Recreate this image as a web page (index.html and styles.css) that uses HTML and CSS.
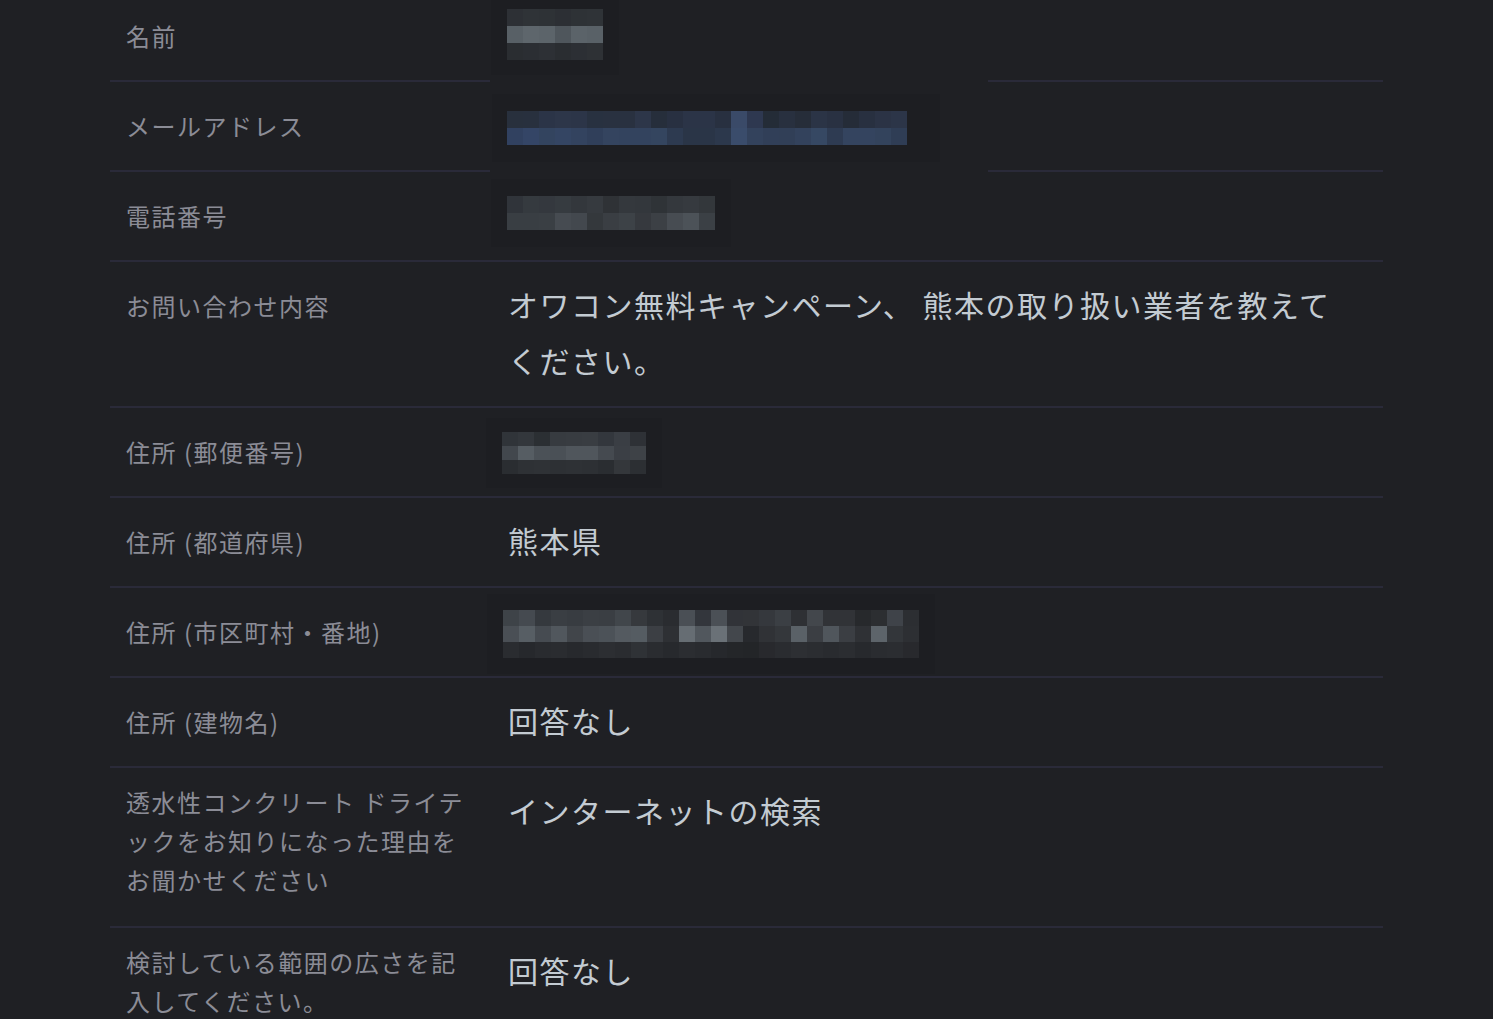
FILE: index.html
```html
<!DOCTYPE html>
<html lang="ja">
<head>
<meta charset="utf-8">
<title>お問い合わせ内容</title>
<link rel="stylesheet" href="styles.css">
</head>
<body>
<div class="sheet">
  <div class="row">
    <div class="label">名前</div>
    <div class="value">
      <svg class="mosaic m-name" width="128" height="85" viewBox="0 0 128 85" shape-rendering="crispEdges">
        <rect x="0" y="0" width="128" height="85" fill="#1d1e22"/>
        <g transform="translate(16,17)">
          <rect x="0" y="0" width="16" height="17" fill="#2d3035"/><rect x="16" y="0" width="16" height="17" fill="#2f3337"/><rect x="32" y="0" width="16" height="17" fill="#2e3236"/><rect x="48" y="0" width="16" height="17" fill="#2c2f34"/><rect x="64" y="0" width="16" height="17" fill="#2e3236"/><rect x="80" y="0" width="16" height="17" fill="#2f3337"/>
          <rect x="0" y="17" width="16" height="17" fill="#586066"/><rect x="16" y="17" width="16" height="17" fill="#5e666c"/><rect x="32" y="17" width="16" height="17" fill="#5c646a"/><rect x="48" y="17" width="16" height="17" fill="#4f565c"/><rect x="64" y="17" width="16" height="17" fill="#5b6369"/><rect x="80" y="17" width="16" height="17" fill="#596167"/>
          <rect x="0" y="34" width="16" height="17" fill="#2a2d31"/><rect x="16" y="34" width="16" height="17" fill="#2b2e33"/><rect x="32" y="34" width="16" height="17" fill="#2d3035"/><rect x="48" y="34" width="16" height="17" fill="#2a2d31"/><rect x="64" y="34" width="16" height="17" fill="#2c2f34"/><rect x="80" y="34" width="16" height="17" fill="#2e3135"/>
        </g>
      </svg>
    </div>
  </div>

  <div class="row">
    <div class="label">メールアドレス</div>
    <div class="value value--covered">
      <svg class="cover" width="498" height="102" viewBox="0 0 498 102" shape-rendering="crispEdges">
        <rect x="0" y="0" width="498" height="102" fill="#1f2024"/>
        <rect x="2" y="19" width="448" height="68" fill="#1d1e22"/>
        <g transform="translate(17,36)">
          <rect x="0" y="0" width="16" height="17" fill="#28303d"/><rect x="16" y="0" width="16" height="17" fill="#28303e"/><rect x="32" y="0" width="16" height="17" fill="#2b3447"/><rect x="48" y="0" width="16" height="17" fill="#2d3649"/><rect x="64" y="0" width="16" height="17" fill="#2c3548"/><rect x="80" y="0" width="16" height="17" fill="#283140"/><rect x="96" y="0" width="16" height="17" fill="#293140"/><rect x="112" y="0" width="16" height="17" fill="#293140"/><rect x="128" y="0" width="16" height="17" fill="#2d3649"/><rect x="144" y="0" width="16" height="17" fill="#262e3b"/><rect x="160" y="0" width="16" height="17" fill="#283041"/><rect x="176" y="0" width="16" height="17" fill="#2b3447"/><rect x="192" y="0" width="16" height="17" fill="#2b3447"/><rect x="208" y="0" width="16" height="17" fill="#283040"/><rect x="224" y="0" width="16" height="17" fill="#3a4a68"/><rect x="240" y="0" width="16" height="17" fill="#2e3850"/><rect x="256" y="0" width="16" height="17" fill="#242c37"/><rect x="272" y="0" width="16" height="17" fill="#28303f"/><rect x="288" y="0" width="16" height="17" fill="#262d39"/><rect x="304" y="0" width="16" height="17" fill="#2b3446"/><rect x="320" y="0" width="16" height="17" fill="#293142"/><rect x="336" y="0" width="16" height="17" fill="#252c38"/><rect x="352" y="0" width="16" height="17" fill="#283040"/><rect x="368" y="0" width="16" height="17" fill="#2b3345"/><rect x="384" y="0" width="16" height="17" fill="#2c3548"/>
          <rect x="0" y="17" width="16" height="17" fill="#314160"/><rect x="16" y="17" width="16" height="17" fill="#344566"/><rect x="32" y="17" width="16" height="17" fill="#33445f"/><rect x="48" y="17" width="16" height="17" fill="#344563"/><rect x="64" y="17" width="16" height="17" fill="#33435f"/><rect x="80" y="17" width="16" height="17" fill="#303f5a"/><rect x="96" y="17" width="16" height="17" fill="#34445f"/><rect x="112" y="17" width="16" height="17" fill="#33435e"/><rect x="128" y="17" width="16" height="17" fill="#33435e"/><rect x="144" y="17" width="16" height="17" fill="#34455f"/><rect x="160" y="17" width="16" height="17" fill="#2d3a50"/><rect x="176" y="17" width="16" height="17" fill="#2a3547"/><rect x="192" y="17" width="16" height="17" fill="#2a3547"/><rect x="208" y="17" width="16" height="17" fill="#2c384c"/><rect x="224" y="17" width="16" height="17" fill="#3a4c6b"/><rect x="240" y="17" width="16" height="17" fill="#33425c"/><rect x="256" y="17" width="16" height="17" fill="#313f58"/><rect x="272" y="17" width="16" height="17" fill="#313f57"/><rect x="288" y="17" width="16" height="17" fill="#33425c"/><rect x="304" y="17" width="16" height="17" fill="#364863"/><rect x="320" y="17" width="16" height="17" fill="#2e3b52"/><rect x="336" y="17" width="16" height="17" fill="#34445f"/><rect x="352" y="17" width="16" height="17" fill="#34445f"/><rect x="368" y="17" width="16" height="17" fill="#33435c"/><rect x="384" y="17" width="16" height="17" fill="#2f3d55"/>
        </g>
      </svg>
    </div>
  </div>

  <div class="row">
    <div class="label">電話番号</div>
    <div class="value">
      <svg class="mosaic m-phone" width="240" height="68" viewBox="0 0 240 68" shape-rendering="crispEdges">
        <rect x="0" y="0" width="240" height="68" fill="#1d1e22"/>
        <g transform="translate(16,17)">
          <rect x="0" y="0" width="16" height="17" fill="#30343a"/><rect x="16" y="0" width="16" height="17" fill="#353a3f"/><rect x="32" y="0" width="16" height="17" fill="#34383e"/><rect x="48" y="0" width="16" height="17" fill="#363b40"/><rect x="64" y="0" width="16" height="17" fill="#33373c"/><rect x="80" y="0" width="16" height="17" fill="#363a3f"/><rect x="96" y="0" width="16" height="17" fill="#2f3236"/><rect x="112" y="0" width="16" height="17" fill="#34383d"/><rect x="128" y="0" width="16" height="17" fill="#33373c"/><rect x="144" y="0" width="16" height="17" fill="#2f3337"/><rect x="160" y="0" width="16" height="17" fill="#34383d"/><rect x="176" y="0" width="16" height="17" fill="#363a3f"/><rect x="192" y="0" width="16" height="17" fill="#33373b"/>
          <rect x="0" y="17" width="16" height="17" fill="#393e43"/><rect x="16" y="17" width="16" height="17" fill="#393e43"/><rect x="32" y="17" width="16" height="17" fill="#3a3f44"/><rect x="48" y="17" width="16" height="17" fill="#464b51"/><rect x="64" y="17" width="16" height="17" fill="#43484e"/><rect x="80" y="17" width="16" height="17" fill="#34383c"/><rect x="96" y="17" width="16" height="17" fill="#3a3e43"/><rect x="112" y="17" width="16" height="17" fill="#3d4247"/><rect x="128" y="17" width="16" height="17" fill="#36393e"/><rect x="144" y="17" width="16" height="17" fill="#3c4045"/><rect x="160" y="17" width="16" height="17" fill="#474c52"/><rect x="176" y="17" width="16" height="17" fill="#4c5258"/><rect x="192" y="17" width="16" height="17" fill="#3b4045"/>
        </g>
      </svg>
    </div>
  </div>

  <div class="row">
    <div class="label">お問い合わせ内容</div>
    <div class="value">オワコン無料キャンペーン、 熊本の取り扱い業者を教えてください。</div>
  </div>

  <div class="row">
    <div class="label">住所 (郵便番号)</div>
    <div class="value">
      <svg class="mosaic m-zip" width="176" height="70" viewBox="0 0 176 70" shape-rendering="crispEdges">
        <rect x="0" y="0" width="176" height="70" fill="#1d1e22"/>
        <g transform="translate(16,14)">
          <rect x="0" y="0" width="16" height="14" fill="#303439"/><rect x="16" y="0" width="16" height="14" fill="#33373c"/><rect x="32" y="0" width="16" height="14" fill="#2b2f33"/><rect x="48" y="0" width="16" height="14" fill="#373b40"/><rect x="64" y="0" width="16" height="14" fill="#383c41"/><rect x="80" y="0" width="16" height="14" fill="#393d42"/><rect x="96" y="0" width="16" height="14" fill="#33373d"/><rect x="112" y="0" width="16" height="14" fill="#3a3e44"/><rect x="128" y="0" width="16" height="14" fill="#2e3136"/>
          <rect x="0" y="14" width="16" height="14" fill="#42474d"/><rect x="16" y="14" width="16" height="14" fill="#565d63"/><rect x="32" y="14" width="16" height="14" fill="#4b5157"/><rect x="48" y="14" width="16" height="14" fill="#4a5056"/><rect x="64" y="14" width="16" height="14" fill="#50565c"/><rect x="80" y="14" width="16" height="14" fill="#50565c"/><rect x="96" y="14" width="16" height="14" fill="#454a50"/><rect x="112" y="14" width="16" height="14" fill="#3b3f45"/><rect x="128" y="14" width="16" height="14" fill="#3e4247"/>
          <rect x="0" y="28" width="16" height="14" fill="#2a2d31"/><rect x="16" y="28" width="16" height="14" fill="#2e3135"/><rect x="32" y="28" width="16" height="14" fill="#2f3236"/><rect x="48" y="28" width="16" height="14" fill="#2d3034"/><rect x="64" y="28" width="16" height="14" fill="#2e3135"/><rect x="80" y="28" width="16" height="14" fill="#2d3034"/><rect x="96" y="28" width="16" height="14" fill="#2a2d31"/><rect x="112" y="28" width="16" height="14" fill="#34373b"/><rect x="128" y="28" width="16" height="14" fill="#2c2f33"/>
        </g>
      </svg>
    </div>
  </div>

  <div class="row">
    <div class="label">住所 (都道府県)</div>
    <div class="value">熊本県</div>
  </div>

  <div class="row">
    <div class="label">住所 (市区町村・番地)</div>
    <div class="value">
      <svg class="mosaic m-addr" width="448" height="80" viewBox="0 0 448 80" shape-rendering="crispEdges">
        <rect x="0" y="0" width="448" height="80" fill="#1d1e22"/>
        <g transform="translate(16,16)">
          <rect x="0" y="0" width="16" height="16" fill="#3e4348"/><rect x="16" y="0" width="16" height="16" fill="#454a50"/><rect x="32" y="0" width="16" height="16" fill="#35393e"/><rect x="48" y="0" width="16" height="16" fill="#3a3e43"/><rect x="64" y="0" width="16" height="16" fill="#383c41"/><rect x="80" y="0" width="16" height="16" fill="#3b3f44"/><rect x="96" y="0" width="16" height="16" fill="#3a3e43"/><rect x="112" y="0" width="16" height="16" fill="#41464b"/><rect x="128" y="0" width="16" height="16" fill="#36393d"/><rect x="144" y="0" width="16" height="16" fill="#2e3135"/><rect x="160" y="0" width="16" height="16" fill="#2a2c30"/><rect x="176" y="0" width="16" height="16" fill="#4a4f55"/><rect x="192" y="0" width="16" height="16" fill="#33363c"/><rect x="208" y="0" width="16" height="16" fill="#4b5056"/><rect x="224" y="0" width="16" height="16" fill="#313338"/><rect x="240" y="0" width="16" height="16" fill="#323438"/><rect x="256" y="0" width="16" height="16" fill="#35383d"/><rect x="272" y="0" width="16" height="16" fill="#3b3f44"/><rect x="288" y="0" width="16" height="16" fill="#2e3034"/><rect x="304" y="0" width="16" height="16" fill="#43474c"/><rect x="320" y="0" width="16" height="16" fill="#313337"/><rect x="336" y="0" width="16" height="16" fill="#313337"/><rect x="352" y="0" width="16" height="16" fill="#27292c"/><rect x="368" y="0" width="16" height="16" fill="#2c2e31"/><rect x="384" y="0" width="16" height="16" fill="#3f4349"/><rect x="400" y="0" width="16" height="16" fill="#2c2e32"/>
          <rect x="0" y="16" width="16" height="16" fill="#4a4f55"/><rect x="16" y="16" width="16" height="16" fill="#575e64"/><rect x="32" y="16" width="16" height="16" fill="#464b51"/><rect x="48" y="16" width="16" height="16" fill="#51575d"/><rect x="64" y="16" width="16" height="16" fill="#41454a"/><rect x="80" y="16" width="16" height="16" fill="#4a4f55"/><rect x="96" y="16" width="16" height="16" fill="#4c5258"/><rect x="112" y="16" width="16" height="16" fill="#545a60"/><rect x="128" y="16" width="16" height="16" fill="#555c62"/><rect x="144" y="16" width="16" height="16" fill="#3c3f44"/><rect x="160" y="16" width="16" height="16" fill="#2e3034"/><rect x="176" y="16" width="16" height="16" fill="#666d73"/><rect x="192" y="16" width="16" height="16" fill="#51575d"/><rect x="208" y="16" width="16" height="16" fill="#6a7177"/><rect x="224" y="16" width="16" height="16" fill="#43474c"/><rect x="240" y="16" width="16" height="16" fill="#27292d"/><rect x="256" y="16" width="16" height="16" fill="#303236"/><rect x="272" y="16" width="16" height="16" fill="#34373b"/><rect x="288" y="16" width="16" height="16" fill="#5a6167"/><rect x="304" y="16" width="16" height="16" fill="#3b3e43"/><rect x="320" y="16" width="16" height="16" fill="#50565c"/><rect x="336" y="16" width="16" height="16" fill="#3b3e43"/><rect x="352" y="16" width="16" height="16" fill="#2f3135"/><rect x="368" y="16" width="16" height="16" fill="#5d646a"/><rect x="384" y="16" width="16" height="16" fill="#33363a"/><rect x="400" y="16" width="16" height="16" fill="#2d2f33"/>
          <rect x="0" y="32" width="16" height="16" fill="#2a2c30"/><rect x="16" y="32" width="16" height="16" fill="#26282c"/><rect x="32" y="32" width="16" height="16" fill="#292b2f"/><rect x="48" y="32" width="16" height="16" fill="#2a2c30"/><rect x="64" y="32" width="16" height="16" fill="#27292d"/><rect x="80" y="32" width="16" height="16" fill="#292b2f"/><rect x="96" y="32" width="16" height="16" fill="#2c2e32"/><rect x="112" y="32" width="16" height="16" fill="#2a2c30"/><rect x="128" y="32" width="16" height="16" fill="#2f3236"/><rect x="144" y="32" width="16" height="16" fill="#2a2c30"/><rect x="160" y="32" width="16" height="16" fill="#27292d"/><rect x="176" y="32" width="16" height="16" fill="#2b2d31"/><rect x="192" y="32" width="16" height="16" fill="#292b2f"/><rect x="208" y="32" width="16" height="16" fill="#26282c"/><rect x="224" y="32" width="16" height="16" fill="#242629"/><rect x="240" y="32" width="16" height="16" fill="#232528"/><rect x="256" y="32" width="16" height="16" fill="#28292d"/><rect x="272" y="32" width="16" height="16" fill="#2a2c30"/><rect x="288" y="32" width="16" height="16" fill="#2d2f33"/><rect x="304" y="32" width="16" height="16" fill="#2b2d31"/><rect x="320" y="32" width="16" height="16" fill="#292b2f"/><rect x="336" y="32" width="16" height="16" fill="#2b2d31"/><rect x="352" y="32" width="16" height="16" fill="#27292d"/><rect x="368" y="32" width="16" height="16" fill="#2a2c30"/><rect x="384" y="32" width="16" height="16" fill="#2b2d31"/><rect x="400" y="32" width="16" height="16" fill="#28292d"/>
        </g>
      </svg>
    </div>
  </div>

  <div class="row">
    <div class="label">住所 (建物名)</div>
    <div class="value">回答なし</div>
  </div>

  <div class="row">
    <div class="label label--multi">透水性コンクリート ドライテックをお知りになった理由をお聞かせください</div>
    <div class="value">インターネットの検索</div>
  </div>

  <div class="row">
    <div class="label label--multi">検討している範囲の広さを記入してください。</div>
    <div class="value">回答なし</div>
  </div>
</div>
</body>
</html>
```

FILE: styles.css
```css
* {
  box-sizing: border-box;
}

html,
body {
  margin: 0;
  padding: 0;
  background: #1f2024;
}

body {
  font-family: "Noto Sans CJK JP", "Noto Sans", sans-serif;
  overflow: hidden;
}

.sheet {
  width: 1273px;
  margin: -8px auto 0;
}

.row {
  display: grid;
  grid-template-columns: 380px 1fr;
  min-height: 90px;
  border-bottom: 2px solid #2a2a39;
}

.label {
  padding: 24px 16px 23px 16px;
  font-size: 24px;
  line-height: 39px;
  letter-spacing: 1.5px;
  color: #8b8c96;
}

.label--multi {
  padding-top: 14px;
  padding-bottom: 27px;
}

.value {
  padding: 14px 35px 18px 18px;
  font-size: 30px;
  line-height: 56px;
  letter-spacing: 1.5px;
  color: #c3cbd2;
}

.value--covered {
  position: relative;
}

.mosaic {
  display: block;
}

.m-name {
  margin: -14px 0 -15px -17px;
}

.m-phone {
  margin: -7px 0 -5px -17px;
}

.m-zip {
  margin: -4px 0 -10px -22px;
}

.m-addr {
  margin: -8px 0 -16px -21px;
}

.cover {
  position: absolute;
  left: 0;
  top: -7px;
  display: block;
}
```
